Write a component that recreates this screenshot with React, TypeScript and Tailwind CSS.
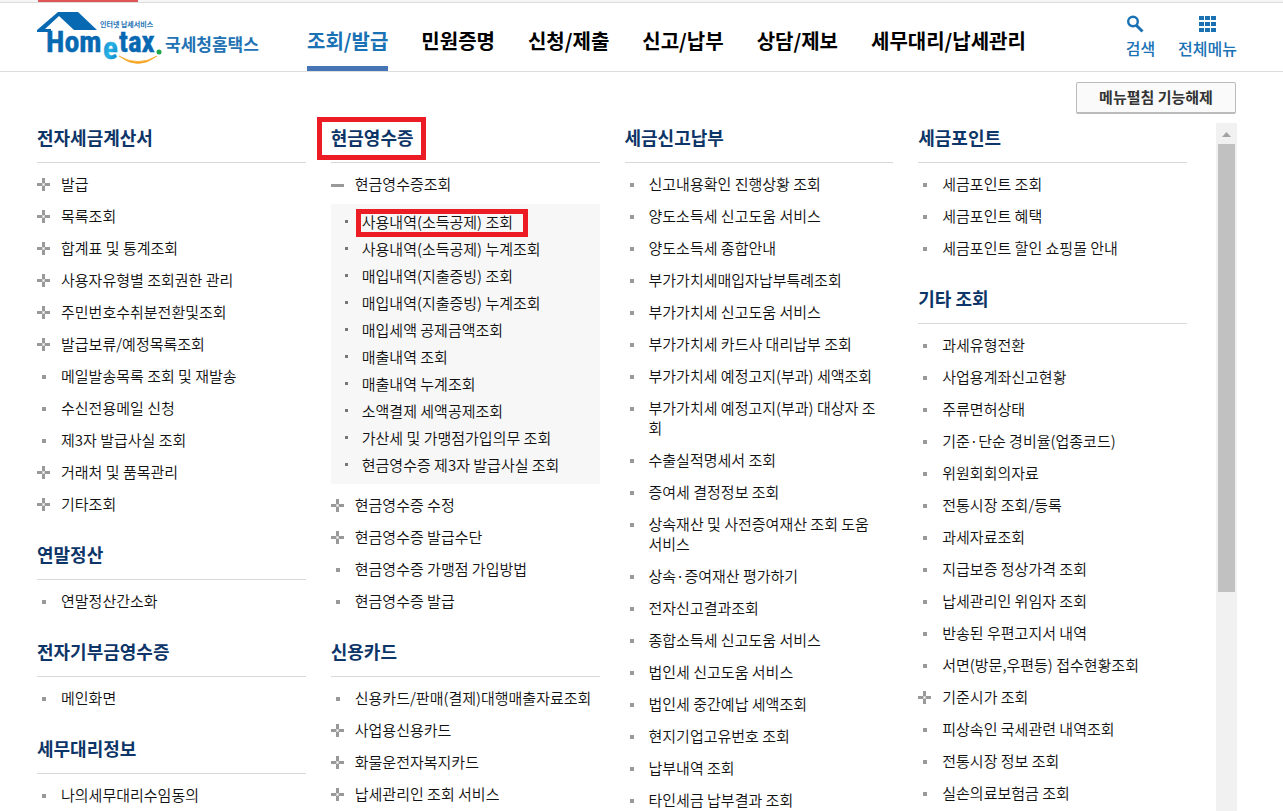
import React from 'react';

type Marker = 'dot' | 'plus' | 'minus';

interface MenuItem {
  label: string;
  marker?: Marker;
  children?: string[];
}

interface MenuSection {
  title: string;
  highlighted?: boolean;
  items: MenuItem[];
}

const navItems = ['조회/발급', '민원증명', '신청/제출', '신고/납부', '상담/제보', '세무대리/납세관리'];

const columns: MenuSection[][] = [
  [
    {
      title: '전자세금계산서',
      items: [
        { label: '발급', marker: 'plus' },
        { label: '목록조회', marker: 'plus' },
        { label: '합계표 및 통계조회', marker: 'plus' },
        { label: '사용자유형별 조회권한 관리', marker: 'plus' },
        { label: '주민번호수취분전환및조회', marker: 'plus' },
        { label: '발급보류/예정목록조회', marker: 'plus' },
        { label: '메일발송목록 조회 및 재발송' },
        { label: '수신전용메일 신청' },
        { label: '제3자 발급사실 조회' },
        { label: '거래처 및 품목관리', marker: 'plus' },
        { label: '기타조회', marker: 'plus' },
      ],
    },
    { title: '연말정산', items: [{ label: '연말정산간소화' }] },
    { title: '전자기부금영수증', items: [{ label: '메인화면' }] },
    { title: '세무대리정보', items: [{ label: '나의세무대리수임동의' }] },
  ],
  [
    {
      title: '현금영수증',
      highlighted: true,
      items: [
        {
          label: '현금영수증조회',
          marker: 'minus',
          children: [
            '사용내역(소득공제) 조회',
            '사용내역(소득공제) 누계조회',
            '매입내역(지출증빙) 조회',
            '매입내역(지출증빙) 누계조회',
            '매입세액 공제금액조회',
            '매출내역 조회',
            '매출내역 누계조회',
            '소액결제 세액공제조회',
            '가산세 및 가맹점가입의무 조회',
            '현금영수증 제3자 발급사실 조회',
          ],
        },
        { label: '현금영수증 수정', marker: 'plus' },
        { label: '현금영수증 발급수단', marker: 'plus' },
        { label: '현금영수증 가맹점 가입방법' },
        { label: '현금영수증 발급' },
      ],
    },
    {
      title: '신용카드',
      items: [
        { label: '신용카드/판매(결제)대행매출자료조회' },
        { label: '사업용신용카드', marker: 'plus' },
        { label: '화물운전자복지카드', marker: 'plus' },
        { label: '납세관리인 조회 서비스', marker: 'plus' },
      ],
    },
  ],
  [
    {
      title: '세금신고납부',
      items: [
        { label: '신고내용확인 진행상황 조회' },
        { label: '양도소득세 신고도움 서비스' },
        { label: '양도소득세 종합안내' },
        { label: '부가가치세매입자납부특례조회' },
        { label: '부가가치세 신고도움 서비스' },
        { label: '부가가치세 카드사 대리납부 조회' },
        { label: '부가가치세 예정고지(부과) 세액조회' },
        { label: '부가가치세 예정고지(부과) 대상자 조\n회' },
        { label: '수출실적명세서 조회' },
        { label: '증여세 결정정보 조회' },
        { label: '상속재산 및 사전증여재산 조회 도움\n서비스' },
        { label: '상속·증여재산 평가하기' },
        { label: '전자신고결과조회' },
        { label: '종합소득세 신고도움 서비스' },
        { label: '법인세 신고도움 서비스' },
        { label: '법인세 중간예납 세액조회' },
        { label: '현지기업고유번호 조회' },
        { label: '납부내역 조회' },
        { label: '타인세금 납부결과 조회' },
      ],
    },
  ],
  [
    {
      title: '세금포인트',
      items: [
        { label: '세금포인트 조회' },
        { label: '세금포인트 혜택' },
        { label: '세금포인트 할인 쇼핑몰 안내' },
      ],
    },
    {
      title: '기타 조회',
      items: [
        { label: '과세유형전환' },
        { label: '사업용계좌신고현황' },
        { label: '주류면허상태' },
        { label: '기준·단순 경비율(업종코드)' },
        { label: '위원회회의자료' },
        { label: '전통시장 조회/등록' },
        { label: '과세자료조회' },
        { label: '지급보증 정상가격 조회' },
        { label: '납세관리인 위임자 조회' },
        { label: '반송된 우편고지서 내역' },
        { label: '서면(방문,우편등) 접수현황조회' },
        { label: '기준시가 조회', marker: 'plus' },
        { label: '피상속인 국세관련 내역조회' },
        { label: '전통시장 정보 조회' },
        { label: '실손의료보험금 조회' },
      ],
    },
  ],
];

const Logo: React.FC = () => (
  <svg width="224" height="58" viewBox="0 0 224 58" role="img" aria-label="Hometax 국세청홈택스">
    <defs>
      <linearGradient id="logo-e" x1="0" y1="0" x2="1" y2="1">
        <stop offset="0" stopColor="#0a72bd" />
        <stop offset="0.5" stopColor="#27b4e6" />
        <stop offset="1" stopColor="#0a72bd" />
      </linearGradient>
    </defs>
    <path d="M0 20 L21 2 H41 L60 20 H37 L22 6 L8 19 H14 V22 H0 Z" fill="#0869b3" />
    <g fontFamily='"Liberation Sans Narrow", "Roboto Condensed", Roboto, sans-serif' fontWeight="700" strokeWidth="0.4">
      <text x="9" y="42" fontSize="30" fill="#0869b3" stroke="#0869b3">Hom</text>
      <text x="66" y="49" fontSize="31" fill="url(#logo-e)" stroke="url(#logo-e)">e</text>
      <text x="82" y="42" fontSize="29" fill="#0869b3" stroke="#0869b3">tax</text>
    </g>
    <circle cx="122" cy="42" r="2.5" fill="#1ea64a" />
    <path d="M82 46 Q101 61 120 46 Q101 57 82 46 Z" fill="#f5a21d" stroke="#f5a21d" strokeWidth="0.6" />
    <g fontFamily='"Noto Sans CJK KR", sans-serif' fill="#2272b4">
      <text x="63" y="17" fontSize="7" fontWeight="700">인터넷 납세서비스</text>
      <text x="128" y="41" fontSize="17" fontWeight="700">국세청홈택스</text>
    </g>
  </svg>
);

const SearchIcon: React.FC = () => (
  <svg width="18" height="18" viewBox="0 0 18 18" fill="none" stroke="#1a72b5" aria-hidden="true">
    <circle cx="7" cy="6.5" r="4.8" strokeWidth="2.4" />
    <path d="M10.5 10.5 L16.5 16.5" strokeWidth="3" />
  </svg>
);

const GridIcon: React.FC = () => (
  <svg width="18" height="18" viewBox="0 0 18 18" fill="#1a72b5" aria-hidden="true">
    {[1, 7, 13].map(y => [0, 6, 12].map(x => <rect key={`${x}-${y}`} x={x} y={y} width="5" height="4" />))}
  </svg>
);

const MarkerIcon: React.FC<{ marker: Marker }> = ({ marker }) => (
  <svg className="mt-px h-5 w-[13px] shrink-0" viewBox="0 0 13 20" fill="#999999" aria-hidden="true">
    {marker === 'dot' && <rect x="5" y="8" width="4" height="4" />}
    {marker === 'minus' && <rect x="0" y="9" width="13" height="3" />}
    {marker === 'plus' && (
      <>
        <path d="M5 3h3v5h5v3H8v5H5v-5H0V8h5z" />
        <rect x="5" y="8" width="3" height="3" fill="#cccccc" />
        <rect x="6" y="9" width="1" height="1" fill="#ffffff" />
      </>
    )}
  </svg>
);

const SubMenu: React.FC<{ items: string[] }> = ({ items }) => (
  <ul className="mt-1 mb-[5px] bg-[#f7f7f7] pt-1 pb-1.5">
    {items.map((label, i) => (
      <li key={label} className="flex h-[27px] items-center pl-3.5">
        <span className="size-[3px] shrink-0 bg-[#777777]" />
        <a href="#" className="relative ml-3.5 whitespace-nowrap">
          {label}
          {i === 0 && <span className="absolute -top-[3px] -left-[6px] h-7 w-[172px] border-5 border-[#ec1c24]" />}
        </a>
      </li>
    ))}
  </ul>
);

const Section: React.FC<{ section: MenuSection }> = ({ section }) => (
  <section>
    <h2 className="border-b border-[#d9d9d9] pb-[13px] text-[18px] leading-6 font-bold text-[#0d3567]">
      <span className="relative inline-block">
        {section.title}
        {section.highlighted && (
          <span className="absolute -top-2 -left-[14px] h-[43px] w-[109px] border-5 border-[#ec1c24]" />
        )}
      </span>
    </h2>
    <ul className="pt-[5px]">
      {section.items.map(item => (
        <li key={item.label}>
          <a href="#" className="flex gap-[11px] pt-1.5 pb-[5px]">
            <MarkerIcon marker={item.marker ?? 'dot'} />
            <span className="mb-px break-all whitespace-pre-line">{item.label}</span>
          </a>
          {item.children && <SubMenu items={item.children} />}
        </li>
      ))}
    </ul>
  </section>
);

const App: React.FC = () => (
  <div className="flex h-screen flex-col overflow-hidden bg-white font-['Noto_Sans_CJK_KR',sans-serif] text-[15px] leading-5 font-[350] text-[#111111]">
    <div className="h-[3px] shrink-0 border-b border-[#dddddd] bg-[#f5f5f5] pl-[38px]">
      <div className="h-0.5 w-[100px] bg-[#e05656]" />
    </div>

    <header className="flex h-[69px] shrink-0 justify-between border-b border-[#dddddd] pr-[46px] pl-[37px]">
      <div className="flex">
        <a href="#" className="pt-[7px]">
          <Logo />
        </a>
        <nav className="ml-[46px] flex gap-[33px] text-[20px] font-bold text-black">
          {navItems.map((item, i) => (
            <a
              key={item}
              href="#"
              className={
                i === 0
                  ? 'flex items-center border-b-5 border-[#4575b4] pt-3 whitespace-nowrap text-[#1a72b5]'
                  : 'flex items-center border-b-5 border-transparent pt-3 whitespace-nowrap'
              }
            >
              {item}
            </a>
          ))}
        </nav>
      </div>
      <div className="flex gap-[23px] pt-3 text-base leading-5 font-medium text-[#1a72b5]">
        <button type="button" className="flex flex-col gap-[5px] whitespace-nowrap">
          <SearchIcon />
          검색
        </button>
        <button type="button" className="flex flex-col items-center gap-[5px] whitespace-nowrap">
          <GridIcon />
          전체메뉴
        </button>
      </div>
    </header>

    <div className="flex shrink-0 justify-end pt-2.5 pr-[47px] pb-[9px]">
      <button
        type="button"
        className="h-8 w-40 rounded-xs border border-b-2 border-[#bbbbbb] bg-[#fafafa] pb-0.5 font-bold text-[#333333]"
      >
        메뉴펼침 기능해제
      </button>
    </div>

    <main className="flex min-h-0 flex-1 gap-[29px] pr-[46px] pl-[37px]">
      <div className="grid flex-1 grid-cols-4 gap-x-[25px] pt-0.5">
        {columns.map((sections, i) => (
          <div key={i} className="flex min-w-0 flex-col gap-[22px]">
            {sections.map(section => (
              <Section key={section.title} section={section} />
            ))}
          </div>
        ))}
      </div>
      <div className="flex w-[21px] shrink-0 flex-col items-center bg-[#f1f1f1]">
        <svg width="21" height="21" viewBox="0 0 21 21" className="shrink-0" aria-hidden="true">
          <path d="M6 14 L10.5 9 L15 14 Z" fill="#a3a3a3" />
        </svg>
        <div className="h-[448px] w-[17px] bg-[#c1c1c1]" />
      </div>
    </main>
  </div>
);

export default App;
